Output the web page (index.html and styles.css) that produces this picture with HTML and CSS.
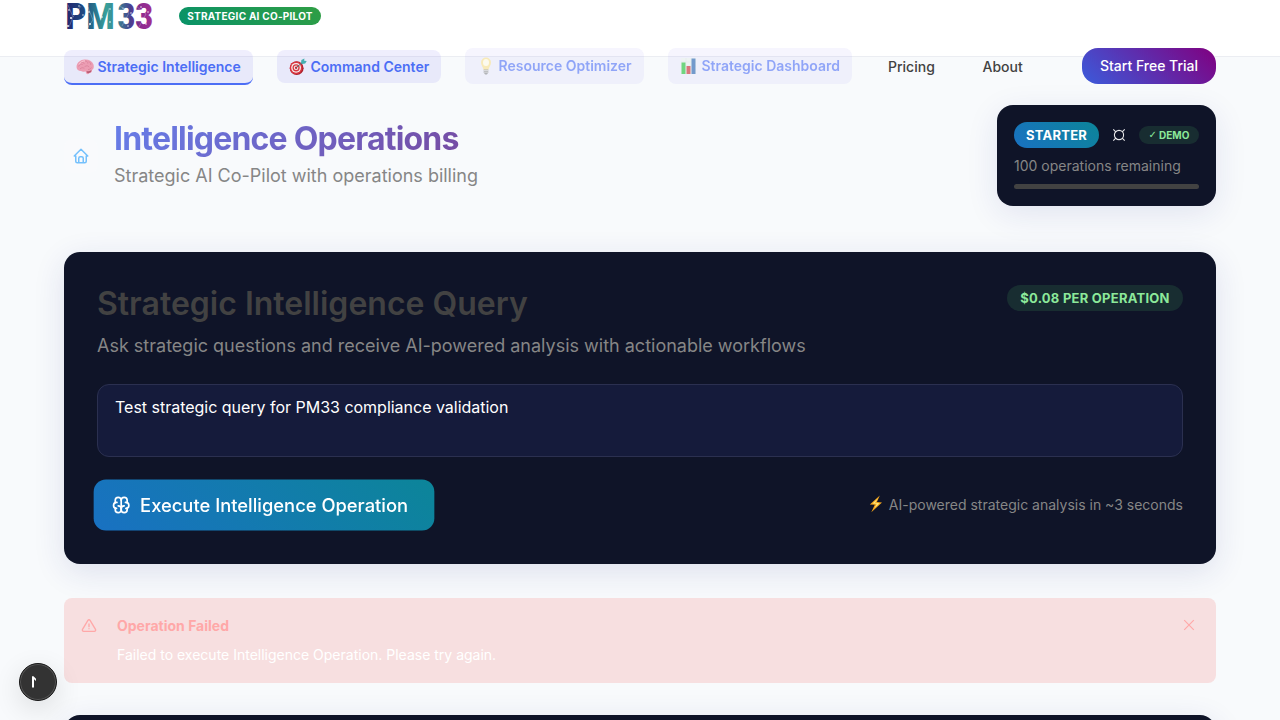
FILE: index.html
```html
<!DOCTYPE html>
<html lang="en">
<head>
<meta charset="utf-8">
<title>PM33 Intelligence Operations</title>
<link rel="stylesheet" href="styles.css">
</head>
<body>
<header class="header">
  <div class="brand">
    <svg class="logo" width="90" height="34" viewBox="0 0 90 34">
      <defs>
        <linearGradient id="ink" gradientUnits="userSpaceOnUse" x1="0" y1="0" x2="90" y2="0">
          <stop offset="0" stop-color="#25216e"/><stop offset=".22" stop-color="#1d4a80"/><stop offset=".47" stop-color="#38a09a"/><stop offset=".6" stop-color="#3a8295"/><stop offset=".74" stop-color="#47408f"/><stop offset=".86" stop-color="#8d2b91"/><stop offset="1" stop-color="#a3308f"/>
        </linearGradient>
      </defs>
      <g class="logo-text" fill="url(#ink)">
        <text x="1.500" y="29" textLength="49" lengthAdjust="spacingAndGlyphs">PM</text>
        <text x="53.500" y="29" textLength="35.500" lengthAdjust="spacingAndGlyphs">33</text>
      </g>
      <path class="logo-lines" d="M4 5 9 17 5 27M9 17 17 6M24 7 29 20 24 27M45 8 41 27M56 6 65 13 58 26M72 6 82 14 75 27"/>
      <g fill="#fff"><circle cx="5" cy="10" r=".8"/><circle cx="7" cy="18" r="1"/><circle cx="15" cy="6" r=".7"/><circle cx="4" cy="26" r=".9"/><circle cx="19" cy="15" r=".7"/><circle cx="25" cy="12" r=".8"/><circle cx="26" cy="24" r=".9"/><circle cx="38" cy="17" r=".8"/><circle cx="46" cy="9" r=".7"/><circle cx="46" cy="22" r=".8"/><circle cx="59" cy="8" r=".6"/><circle cx="67" cy="13" r=".7"/><circle cx="64" cy="26" r=".7"/><circle cx="77" cy="7" r=".7"/><circle cx="84" cy="12" r=".7"/><circle cx="82" cy="24" r=".7"/></g>
    </svg>
    <span class="tagline">STRATEGIC AI CO-PILOT</span>
  </div>
  <nav class="nav">
    <a class="tab tab-active">
      <svg class="pic" width="18" height="18" viewBox="0 0 18 18"><path d="M.6 9.500C.3 5.800 3 2.500 7 1.800c4.500-.9 9 .7 10.400 4.400.9 2.600.2 5-1.500 5.900.3 1.600-.7 2.700-2.300 2.900-.7 1.200-2 1.600-3.300.6l-.9-2.400c-1.700.8-3.300.6-4.300-.3C2.600 13 .8 11.600.6 9.500Z" fill="#ec9db3"/><path d="M2.600 8.500c1-2.600 2.700-2.700 4-1.900M5 4.500c2-.8 3 .2 3.200 1.600M9 3c1.800-.2 3 1 2.800 2.600M12.500 3.800c1.600.3 2.600 1.500 2.200 3M4 11c1.600-1.800 3.600-1.400 4.400-.4M8.500 8.800c2-1.700 4-1 4.700.4M12 11.500c1.400 0 2.800-.6 3.400-2" fill="none" stroke="#d67c97" stroke-width=".7"/><path d="M3 6.500C4.500 3.800 7 2.800 9 2.900" fill="none" stroke="#fbd1dc" stroke-width=".8"/><path d="M10.500 13.200c1.800.3 3.600-.2 5-1.300-.1 2-1.400 2.800-2.400 2.900-.9.700-2 .500-2.600-1.600Z" fill="#b75b72"/></svg>
      <span>Strategic Intelligence</span></a>
    <a class="tab tab-second">
      <svg class="pic" width="18" height="18" viewBox="0 0 18 18"><circle cx="7.700" cy="10.200" r="6.900" fill="#a91f2b"/><circle cx="7.100" cy="9.800" r="6.400" fill="#d93640"/><circle cx="7.100" cy="9.800" r="4.900" fill="#f4eeee"/><circle cx="7.100" cy="9.800" r="3.600" fill="#d93640"/><circle cx="7.100" cy="9.800" r="2.300" fill="#f4eeee"/><circle cx="7.100" cy="9.800" r="1.200" fill="#c72835"/><path d="m7.400 9.500 6-5" stroke="#586a70" stroke-width="1"/><path d="m12 5 .4-3L15.400.5l-.2 2.200 2.500.2-1.500 2.600-3 .5Z" fill="#45afb0"/></svg>
      <span>Command Center</span></a>
    <a class="tab tab-soon tab-third">
      <svg class="pic" width="18" height="18" viewBox="0 0 18 18"><path d="M9 .5a5 5 0 0 0-5 5c0 3 2.200 4.300 2.600 7.500h4.800C11.800 9.800 14 8.500 14 5.500a5 5 0 0 0-5-5Z" fill="#f8e08e"/><ellipse cx="9" cy="5.500" rx="3" ry="3.600" fill="#fffbe5"/><path d="M6.700 12.500h4.600v3L10 17.500H8l-1.300-2Z" fill="#85878c"/><path d="M6.800 13.500h4.400M6.800 15.200h4.400" stroke="#e1e1e4" stroke-width=".7"/></svg>
      <span>Resource Optimizer</span></a>
    <a class="tab tab-soon tab-fourth">
      <svg class="pic" width="18" height="18" viewBox="0 0 18 18"><path d="M1 1h15v16H1Z" fill="#e8efee"/><path d="M1 5h15M1 9h15M1 13h15M6 1v16M11 1v16" stroke="#d2dddd" stroke-width=".5"/><path d="M1.500 5.500h4V17h-4Z" fill="#19bd31"/><path d="M6.500 9h4v8h-4Z" fill="#c91f2a"/><path d="M11.500 1.500h4V17h-4Z" fill="#1b5bad"/></svg>
      <span>Strategic Dashboard</span></a>
    <a class="link pricing">Pricing</a>
    <a class="link about">About</a>
    <a class="trial">Start Free Trial</a>
  </nav>
</header>
<main class="main">
  <section class="hero">
    <div class="hero-left">
      <span class="home">
        <svg width="18" height="18" viewBox="0 0 24 24" fill="none" stroke="#74c0fc" stroke-width="2" stroke-linecap="round" stroke-linejoin="round"><path d="M5 12H3l9-9 9 9h-2M5 12v7a2 2 0 0 0 2 2h10a2 2 0 0 0 2-2v-7M9 21v-6a2 2 0 0 1 2-2h2a2 2 0 0 1 2 2v6"/></svg>
      </span>
      <div>
        <h1 class="title">Intelligence Operations</h1>
        <p class="subtitle">Strategic AI Co-Pilot with operations billing</p>
      </div>
    </div>
    <aside class="plan">
      <div class="plan-row">
        <span class="starter">STARTER</span>
        <svg class="currency" width="14" height="14" viewBox="0 0 14 14" fill="none" stroke="#e8e8ea" stroke-width="1.1"><circle cx="7" cy="7" r="4.600"/><path d="M1.300 1.300 3.800 3.800M12.700 1.300 10.200 3.800M1.300 12.700 3.800 10.200M12.700 12.700 10.200 10.200"/></svg>
        <span class="demo"><span class="check">✓</span>DEMO</span>
      </div>
      <p class="remaining">100 operations remaining</p>
      <div class="meter"></div>
    </aside>
  </section>
  <section class="card query">
    <div class="query-head">
      <h2 class="query-title">Strategic Intelligence Query</h2>
      <span class="price">$0.08 PER OPERATION</span>
    </div>
    <p class="query-sub">Ask strategic questions and receive AI-powered analysis with actionable workflows</p>
    <div class="input">Test strategic query for PM33 compliance validation</div>
    <div class="actions">
      <div class="execute">
        <svg width="20" height="20" viewBox="0 0 24 24" fill="none" stroke="#fff" stroke-width="2" stroke-linecap="round" stroke-linejoin="round"><path d="M15.500 13a3.500 3.500 0 0 0-3.500 3.500v1a3.500 3.500 0 0 0 7 0v-1.800"/><path d="M8.500 13a3.500 3.500 0 0 1 3.500 3.500v1a3.500 3.500 0 0 1-7 0v-1.800"/><path d="M17.500 16a3.500 3.500 0 0 0 0-7H17"/><path d="M19 9.300V6.500a3.500 3.500 0 0 0-7 0"/><path d="M6.500 16a3.500 3.500 0 0 1 0-7H7"/><path d="M5 9.300V6.500a3.500 3.500 0 0 1 7 0v10"/></svg>
        <span>Execute Intelligence Operation</span>
      </div>
      <div class="hint">
        <svg class="bolt" width="14" height="18" viewBox="0 0 14 18"><path d="M10.800.5.800 9.600l5 .2L2.300 17.300 13 7.400 7.900 7Z" fill="#f5a51b"/><path d="M9.200 3 3.500 8.600l4.200.2-2.200 4.500L10.500 8.300 6 7.700Z" fill="#ffe97c"/></svg>
        <span>AI-powered strategic analysis in ~3 seconds</span>
      </div>
    </div>
  </section>
  <section class="alert">
    <svg class="alert-icon" width="16" height="16" viewBox="0 0 24 24" fill="none" stroke="#ffa8a8" stroke-width="2" stroke-linecap="round" stroke-linejoin="round"><path d="M12 9v4M12 16v.01M10.363 3.591 2.257 17.125A1.914 1.914 0 0 0 3.893 19.996H20.107A1.914 1.914 0 0 0 21.743 17.125L13.637 3.591A1.914 1.914 0 0 0 10.363 3.591Z"/></svg>
    <div class="alert-body">
      <h3 class="alert-title">Operation Failed</h3>
      <p class="alert-text">Failed to execute Intelligence Operation. Please try again.</p>
    </div>
    <svg class="close" width="12" height="12" viewBox="0 0 12 12" fill="none" stroke="#ffa8a8" stroke-width="1.1"><path d="M1.200 1.200 10.800 10.800M10.800 1.200 1.200 10.800"/></svg>
  </section>
  <section class="card next"></section>
</main>
<div class="badge"><svg width="36" height="36" viewBox="0 0 36 36"><path d="M12 23.500V12.300h1.500l2.500 2.400V17l-2-1.800v8.300Z" fill="#fff"/></svg></div>
</body>
</html>
```
FILE: styles.css
```css
* { box-sizing: border-box; }
body { margin: 0; height: 720px; overflow: hidden; background: #f8fafc; font-family: Inter, "Noto Sans", sans-serif; color: #424242; }
h1, h2, h3, p { margin: 0; }
.header { height: 57px; padding: 0 64px; background: #fff; border-bottom: 1px solid #ebedf2; }
.brand { height: 48px; display: flex; align-items: flex-start; gap: 25px; }
.logo { display: block; overflow: visible; }
.logo-text { font: 900 36px Roboto, sans-serif; }
.logo-lines { fill: none; stroke: #fff; stroke-width: .4; opacity: .6; }
.tagline { margin-top: 7px; height: 18px; width: 142px; border-radius: 9px; background: linear-gradient(45deg, #099268, #2f9e44); color: #fff; font-size: 10px; font-weight: 700; line-height: 18px; text-align: center; letter-spacing: .25px; white-space: nowrap; }
.nav { position: relative; z-index: 1; height: 37px; display: flex; align-items: flex-start; white-space: nowrap; font-size: 14px; font-weight: 500; }
.tab { display: flex; align-items: center; gap: 3.500px; height: 33px; margin-top: 2px; margin-right: 24px; padding: 0 12px; border-radius: 8px; background: rgba(102, 90, 234, .1); color: #4c6ef5; font-weight: 600; line-height: 20px; }
.tab-active { width: 189px; height: 35px; border-bottom: 2px solid #4c6ef5; }
.tab-second { width: 164px; }
.tab-soon { height: 36px; margin-top: 0; opacity: .6; }
.tab-third { width: 179px; }
.tab-fourth { width: 184px; margin-right: 36px; }
.pic { flex: none; }
.link { line-height: 38px; }
.pricing { width: 94.500px; }
.about { width: 99.500px; }
.trial { width: 134px; height: 36px; border-radius: 16px; background: linear-gradient(45deg, #3b5bdb, #800080); color: #fff; text-align: center; line-height: 36px; }
.main { height: 663px; overflow: hidden; padding: 48px 64px 0; }
.hero { height: 147px; display: flex; justify-content: space-between; align-items: flex-start; }
.hero-left { display: flex; gap: 16px; padding-top: 12px; }
.home { width: 34px; height: 34px; margin-top: 22px; border-radius: 8px; background: rgba(255, 255, 255, .15); display: grid; place-items: center; }
.title { width: fit-content; font-size: 32px; line-height: 43px; letter-spacing: -.8px; font-weight: 700; white-space: nowrap; background: linear-gradient(135deg, #667eea, #764ba2); background-clip: text; color: transparent; }
.subtitle { font-size: 18px; line-height: 28px; margin-top: 2px; color: #868686; white-space: nowrap; }
.plan { width: 219px; height: 101px; padding: 17px; border-radius: 16px; background: #0f1428; box-shadow: 0 8px 32px rgba(31, 38, 135, .1); }
.plan-row { display: flex; align-items: center; justify-content: space-between; height: 26px; }
.starter { width: 85px; height: 26px; border-radius: 13px; background: linear-gradient(45deg, #1971c2, #0c8599); color: #fff; font-size: 13px; font-weight: 700; line-height: 26px; text-align: center; letter-spacing: .25px; }
.demo { display: flex; justify-content: center; gap: 2px; width: 60px; height: 18px; border-radius: 9px; background: #182d31; color: #8ce99a; font-size: 10px; font-weight: 700; line-height: 18px; letter-spacing: .1px; white-space: nowrap; }
.check { font-family: "DejaVu Sans", sans-serif; font-weight: 700; }
.remaining { margin-top: 8px; font-size: 14px; line-height: 20px; color: #868686; white-space: nowrap; }
.meter { margin-top: 8px; height: 5px; border-radius: 3px; background: #424242; }
.card { border-radius: 16px; background: #0f1428; box-shadow: 0 8px 32px rgba(31, 38, 135, .12); }
.query { height: 312px; padding: 33px; }
.query-head { display: flex; justify-content: space-between; height: 39px; }
.query-title { font-size: 32px; font-weight: 600; line-height: 38px; white-space: nowrap; }
.price { width: 176px; height: 26px; border-radius: 13px; background: #182d31; color: #8ce99a; font-size: 13px; font-weight: 700; line-height: 26px; letter-spacing: .25px; text-align: center; white-space: nowrap; }
.query-sub { margin-top: 8px; font-size: 18px; line-height: 28px; color: #868686; white-space: nowrap; }
.input { margin-top: 24px; height: 73px; border: 1px solid #2b3050; border-radius: 12px; background: #151b3b; color: #fff; padding: 10px 17px; font-size: 16px; line-height: 25px; letter-spacing: -.015px; }
.actions { display: flex; align-items: center; justify-content: space-between; height: 50px; margin-top: 23px; }
.execute { width: 334px; height: 50px; padding-left: 17px; display: flex; align-items: center; gap: 8.500px; border-radius: 12px; background: linear-gradient(45deg, #1971c2, #0c8599); color: #fff; font-size: 18px; font-weight: 500; white-space: nowrap; transform: scale(1.02); }
.hint { display: flex; align-items: center; gap: 6px; font-size: 14px; line-height: 20px; color: #868686; white-space: nowrap; }
.bolt { margin-bottom: 3px; }
.alert { height: 85px; margin-top: 34px; padding: 17px; display: flex; border-radius: 8px; background: #f7dfe0; }
.alert-icon { margin-top: 3px; }
.alert-body { flex: 1; margin-left: 20px; }
.alert-title { color: #ffa8a8; font-size: 14px; line-height: 22px; font-weight: 700; }
.alert-text { margin-top: 8px; color: #fff; font-size: 14px; line-height: 20px; }
.close { margin: 4px 4px 0 0; }
.next { height: 80px; margin-top: 32px; }
.badge { position: fixed; left: 19px; top: 663px; width: 38px; height: 38px; border: 1px solid #171717; border-radius: 50%; background: #333; box-shadow: inset 0 0 0 1px #555, 0 8px 28px rgba(0, 0, 0, .12); }
.badge svg { display: block; }
```
